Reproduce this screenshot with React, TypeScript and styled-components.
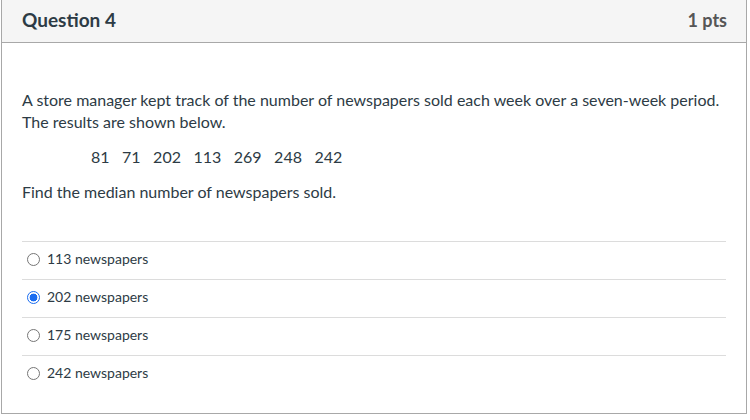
import styled, { createGlobalStyle } from 'styled-components';

const GlobalStyle = createGlobalStyle`
  html, body {
    margin: 0;
    padding: 0;
    background: #fff;
  }
  body {
    font-family: Lato, "Open Sans", sans-serif;
    color: #2d3b45;
  }
`;

const Card = styled.div`
  box-sizing: border-box;
  width: 746px;
  margin-left: 1px;
  border: 1px solid #a8a8a8;
  border-top: none;
`;

const Header = styled.div`
  box-sizing: border-box;
  height: 43px;
  display: flex;
  justify-content: space-between;
  align-items: center;
  padding: 0 19px 0 20px;
  background: #f5f5f5;
  border-bottom: 1px solid #a8a8a8;
`;

const Title = styled.span`
  font-size: 19px;
  font-weight: 700;
  color: #2d3b45;
  margin-top: -3px;
`;

const Points = styled.span`
  font-size: 18px;
  font-weight: 700;
  color: #565656;
  margin-top: -3px;
`;

const Body = styled.div`
  padding: 46px 20px 20px 20px;
`;

const Text = styled.p<{ $indent?: number }>`
  margin: 0 0 13px 0;
  padding-left: ${(p) => p.$indent ?? 0}px;
  font-size: 16px;
  line-height: 22px;
  word-spacing: ${(p) => (p.$indent ? '8.4px' : 'normal')};
`;

const Answers = styled.div`
  margin-top: 38px;
`;

const Answer = styled.label`
  box-sizing: border-box;
  height: 38px;
  display: flex;
  align-items: center;
  gap: 7px;
  padding: 0 0 4px 5px;
  border-top: 1px solid #dcdcdc;
  font-size: 14px;
  color: #2d3b45;
`;

const Radio = styled.span<{ $checked?: boolean }>`
  box-sizing: border-box;
  width: 13px;
  height: 13px;
  border-radius: 50%;
  border: 1px solid ${(p) => (p.$checked ? '#1a6cf0' : '#767676')};
  background: ${(p) => (p.$checked ? 'radial-gradient(circle, #1a6cf0 0 3.6px, #fff 4.2px)' : '#fff')};
  margin-top: 1px;
`;

const answers = [
  { text: '113 newspapers', checked: false },
  { text: '202 newspapers', checked: true },
  { text: '175 newspapers', checked: false },
  { text: '242 newspapers', checked: false },
];

const App = () => {
  return (
    <>
      <GlobalStyle />
      <Card>
        <Header>
          <Title>Question 4</Title>
          <Points>1 pts</Points>
        </Header>
        <Body>
          <Text>
            A store manager kept track of the number of newspapers sold each week over a seven-week period.
            The results are shown below.
          </Text>
          <Text $indent={69}>81 71 202 113 269 248 242</Text>
          <Text>Find the median number of newspapers sold.</Text>
          <Answers>
            {answers.map((a) => (
              <Answer key={a.text}>
                <Radio $checked={a.checked} />
                {a.text}
              </Answer>
            ))}
          </Answers>
        </Body>
      </Card>
    </>
  );
};

export default App;
